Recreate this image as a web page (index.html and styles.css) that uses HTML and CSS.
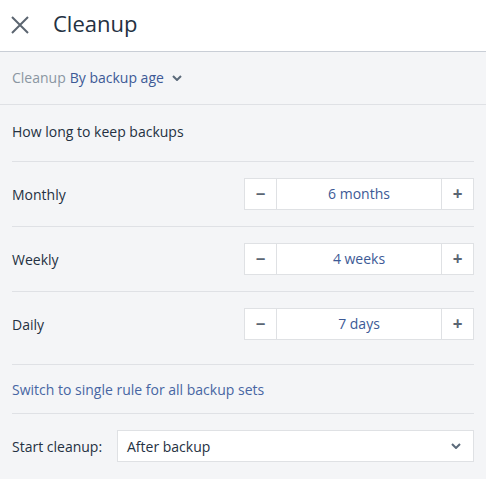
FILE: index.html
```html
<!DOCTYPE html>
<html>
<head>
<meta charset="utf-8">
<link rel="stylesheet" href="styles.css">
</head>
<body>
<div class="panel">
  <header class="header">
    <svg class="close" width="18" height="18" viewBox="0 0 18 18"><path d="M1 1L17 17M17 1L1 17" stroke="#5b6570" stroke-width="2" fill="none"/></svg>
    <h1 class="title">Cleanup</h1>
  </header>
  <div class="mode">
    <span class="mode-label">Cleanup</span>
    <span class="mode-value">By backup age</span>
    <svg class="chev" width="10" height="6" viewBox="0 0 10 6"><path d="M1 1L5 5L9 1" stroke="#5b6a7a" stroke-width="2" fill="none"/></svg>
  </div>
  <div class="content">
    <div class="section-title">How long to keep backups</div>
    <div class="row">
      <span class="row-label">Monthly</span>
      <div class="stepper"><button class="step">&minus;</button><span class="value">6 months</span><button class="step">+</button></div>
    </div>
    <div class="row">
      <span class="row-label">Weekly</span>
      <div class="stepper"><button class="step">&minus;</button><span class="value">4 weeks</span><button class="step">+</button></div>
    </div>
    <div class="row last">
      <span class="row-label">Daily</span>
      <div class="stepper"><button class="step">&minus;</button><span class="value">7 days</span><button class="step">+</button></div>
    </div>
    <div class="link-row"><a class="link">Switch to single rule for all backup sets</a></div>
    <div class="start-row">
      <span class="start-label">Start cleanup:</span>
      <div class="select">
        <span>After backup</span>
        <svg width="10" height="6" viewBox="0 0 10 6"><path d="M1 1L5 5L9 1" stroke="#5b6a7a" stroke-width="2" fill="none"/></svg>
      </div>
    </div>
  </div>
</div>
</body>
</html>
```
FILE: styles.css
```css
* { box-sizing: border-box; }
html, body { margin: 0; padding: 0; }
body {
  background: #f4f5f7;
  font-family: "Open Sans", "Noto Sans", sans-serif;
  font-size: 14px;
  color: #243142;
  width: 486px;
  height: 479px;
  overflow: hidden;
}
.header {
  height: 52px;
  background: #fff;
  border-bottom: 1px solid #c9ced6;
  display: flex;
  align-items: center;
  padding-left: 11px;
}
.close { display: block; margin-top: -1px; }
.title {
  margin: 0 0 0 24px;
  font-size: 22px;
  font-weight: 400;
  color: #243142;
  line-height: 1;
  margin-top: -6px;
}
.mode {
  height: 53px;
  border-bottom: 1px solid #dfe1e5;
  display: flex;
  align-items: center;
  padding-left: 12px;
  padding-bottom: 1px;
}
.mode-label { color: #8a95a2; }
.mode-value { color: #3d5a96; margin-left: 4px; }
.chev { margin-left: 8px; margin-top: 1px; }
.content { padding: 0 12px; }
.section-title {
  height: 57px;
  display: flex;
  align-items: center;
  border-bottom: 1px solid #dfe1e5;
  padding-bottom: 4px;
}
.row {
  height: 65px;
  display: flex;
  align-items: center;
  justify-content: space-between;
  border-bottom: 1px solid #dfe1e5;
}
.row.last { border-bottom: 0; height: 64px; }
.stepper {
  width: 230px;
  height: 32px;
  display: flex;
  background: #fff;
  border: 1px solid #dfe1e4;
}
.step {
  width: 31px;
  height: 30px;
  border: 0;
  background: #fff;
  padding: 0;
  font-family: inherit;
  font-size: 17px;
  font-weight: 700;
  color: #5b6673;
  line-height: 30px;
}
.value {
  flex: 1;
  text-align: center;
  line-height: 30px;
  color: #3d5a96;
  border-left: 1px solid #dfe1e4;
  border-right: 1px solid #dfe1e4;
}
.link-row {
  height: 50px;
  display: flex;
  align-items: center;
  border-top: 1px solid #dfe1e5;
  border-bottom: 1px solid #dfe1e5;
  margin-top: 8px;
}
.link { color: #4766a3; }
.start-row {
  display: flex;
  align-items: center;
  padding-top: 16px;
}
.start-label { width: 105px; }
.select {
  flex: 1;
  height: 32px;
  background: #fff;
  border: 1px solid #dfe1e4;
  display: flex;
  align-items: center;
  justify-content: space-between;
  padding: 0 12px 0 9px;
}
```
